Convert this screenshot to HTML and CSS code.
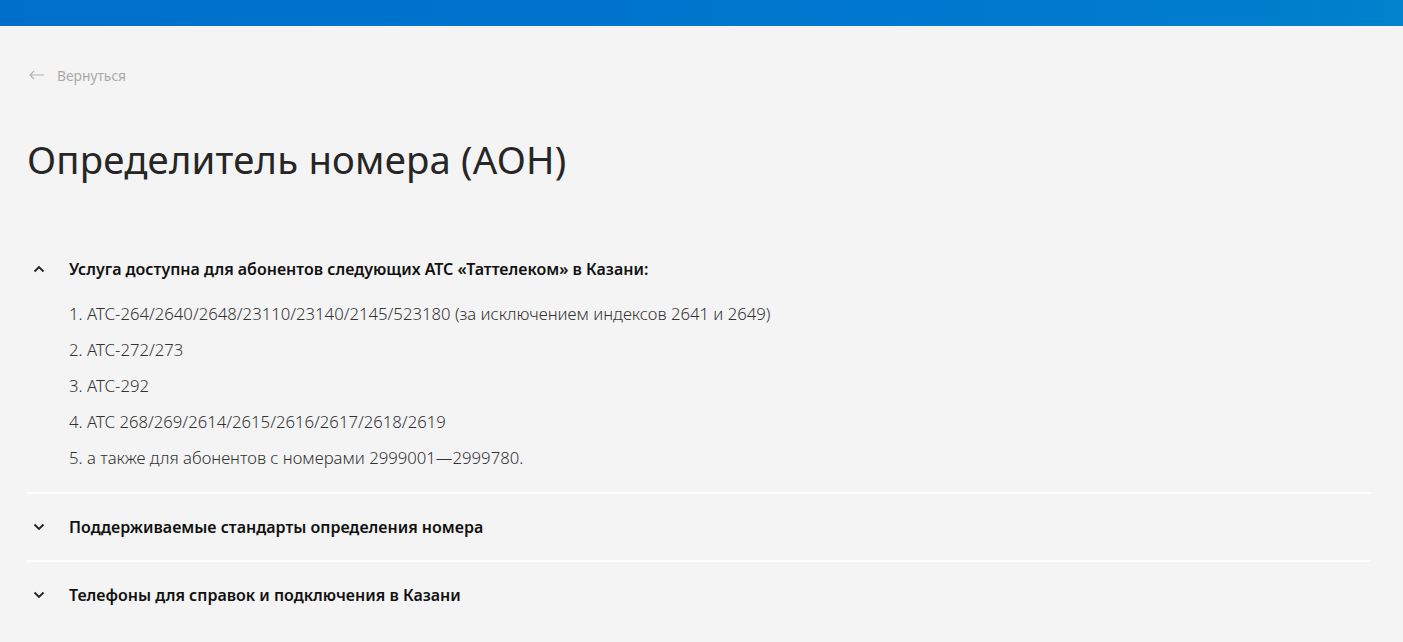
FILE: index.html
```html
<!DOCTYPE html>
<html lang="ru">
<head>
<meta charset="utf-8">
<link rel="stylesheet" href="styles.css">
</head>
<body>
<header class="topbar"></header>
<main class="page">
  <a class="back" href="#">
    <svg class="back-arrow" width="16" height="10" viewBox="0 0 16 10"><path d="M5 1 L1 5 L5 9 M1 5 H15" fill="none" stroke="#b4b4b4" stroke-width="1.2"/></svg>
    <span>Вернуться</span>
  </a>
  <h1 class="title">Определитель номера (АОН)</h1>
  <section class="accordion">
    <div class="acc-item open">
      <div class="acc-head">
        <svg class="chev" width="12" height="8" viewBox="0 0 12 8"><path d="M1.5 6.5 L6 2 L10.5 6.5" fill="none" stroke="#222" stroke-width="1.8"/></svg>
        <span>Услуга доступна для абонентов следующих АТС «Таттелеком» в Казани:</span>
      </div>
      <ol class="acc-body">
        <li>1. АТС-264/2640/2648/23110/23140/2145/523180 (за исключением индексов 2641 и 2649)</li>
        <li>2. АТС-272/273</li>
        <li>3. АТС-292</li>
        <li>4. АТС 268/269/2614/2615/2616/2617/2618/2619</li>
        <li>5. а также для абонентов с номерами 2999001—2999780.</li>
      </ol>
    </div>
    <div class="acc-item">
      <div class="acc-head">
        <svg class="chev" width="12" height="8" viewBox="0 0 12 8"><path d="M1.5 1.5 L6 6 L10.5 1.5" fill="none" stroke="#222" stroke-width="1.8"/></svg>
        <span>Поддерживаемые стандарты определения номера</span>
      </div>
    </div>
    <div class="acc-item">
      <div class="acc-head">
        <svg class="chev" width="12" height="8" viewBox="0 0 12 8"><path d="M1.5 1.5 L6 6 L10.5 1.5" fill="none" stroke="#222" stroke-width="1.8"/></svg>
        <span>Телефоны для справок и подключения в Казани</span>
      </div>
    </div>
  </section>
</main>
</body>
</html>
```

FILE: styles.css
```css
html, body {
  margin: 0;
  padding: 0;
  background: #f4f4f4;
  font-family: "Noto Sans", "Open Sans", sans-serif;
  color: #222;
}
.topbar {
  height: 26px;
  background: linear-gradient(90deg, #006fca 0%, #0074cc 40%, #0079cf 75%, #0082cc 100%);
}
.page {
  padding: 0 32px 0 27px;
}
.back {
  display: flex;
  align-items: center;
  gap: 12px;
  margin-top: 40px;
  padding-left: 2px;
  height: 18px;
  text-decoration: none;
  color: #a9a9a9;
  font-size: 13.8px;
}
.title {
  margin: 50px 0 0 0;
  font-weight: 400;
  font-size: 38.3px;
  line-height: 50px;
  color: #262626;
  letter-spacing: 0.2px;
}
.accordion {
  margin-top: 52px;
}
.acc-item + .acc-item {
  border-top: 2px solid #ffffff;
}
.acc-head {
  display: flex;
  align-items: center;
  height: 66px;
  font-size: 16px;
  font-weight: 600;
  color: #111;
}
.chev {
  width: 12px;
  margin: 0 24px 0 6px;
}
.acc-body {
  list-style: none;
  margin: -6px 0 0 0;
  padding: 0 0 16px 42px;
}
.acc-body li {
  font-size: 16.7px;
  font-weight: 300;
  color: #333;
  line-height: 36px;
}
```
